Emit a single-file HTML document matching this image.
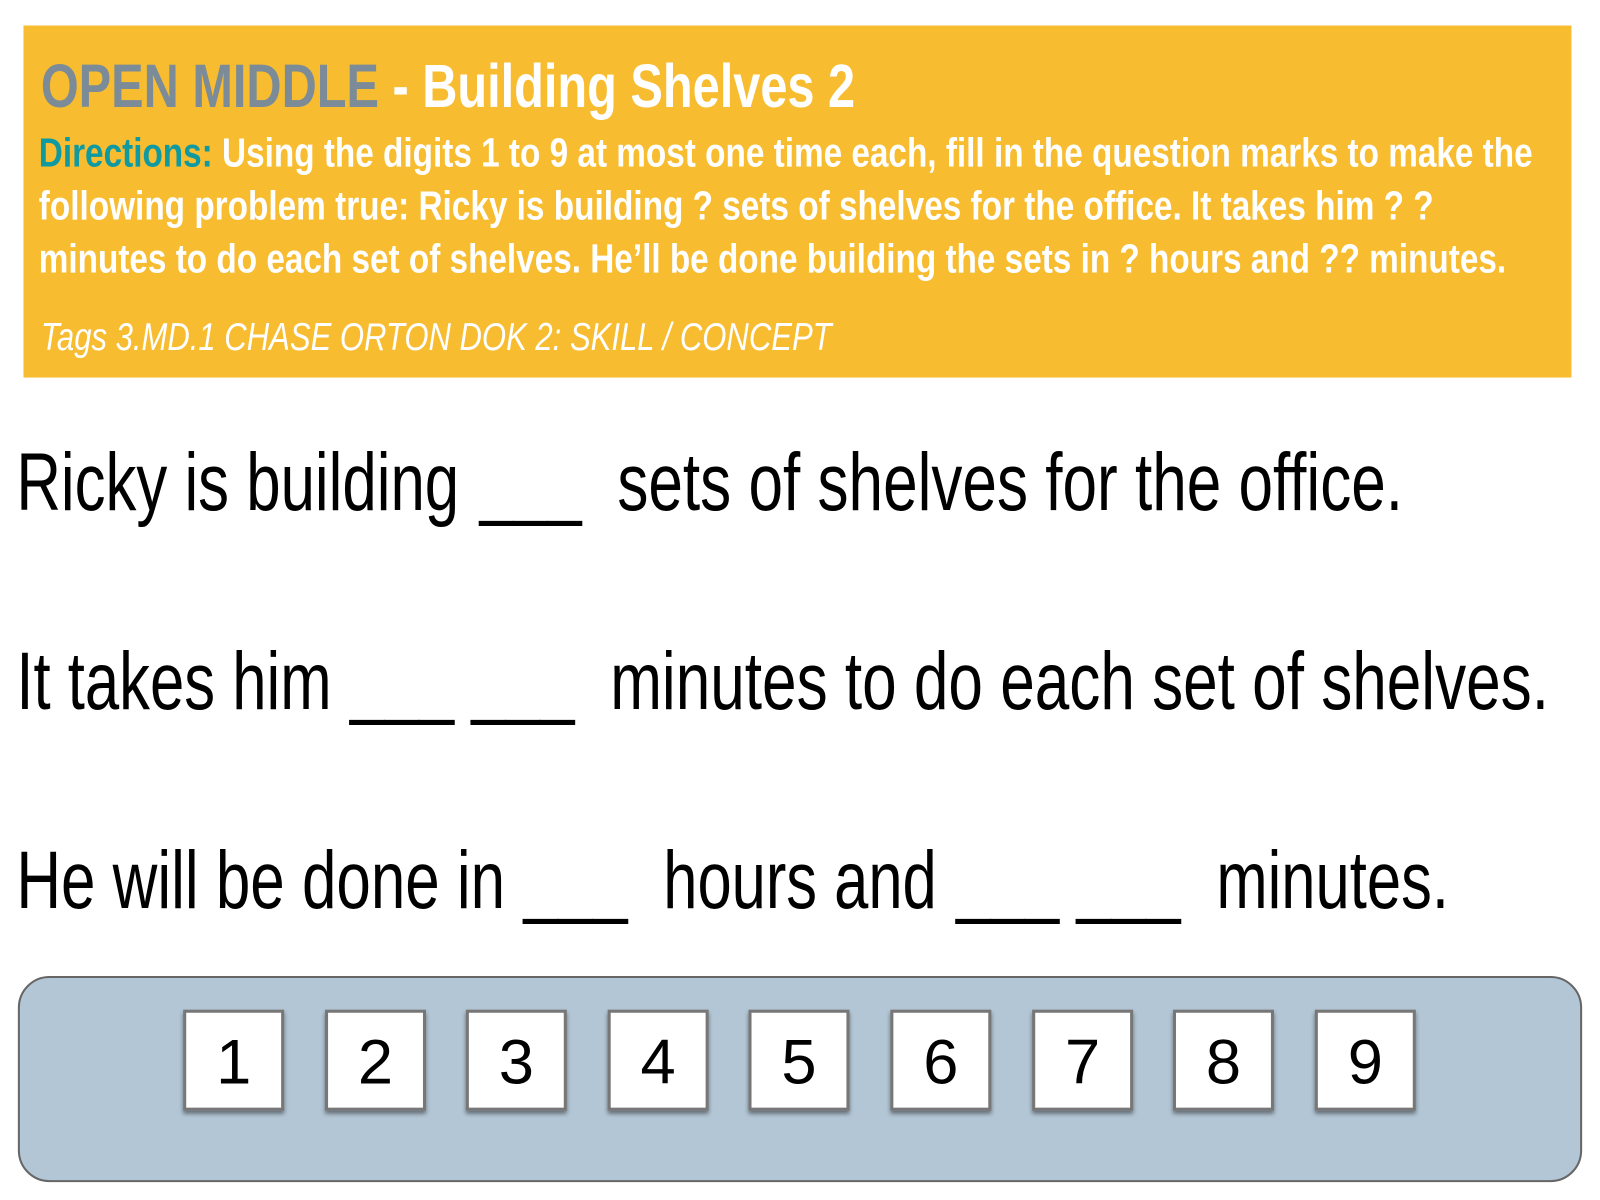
<!DOCTYPE html>
<html><head><meta charset="utf-8"><style>
html,body{margin:0;padding:0;background:#fff;width:1600px;height:1200px;overflow:hidden}
svg{position:absolute;left:0;top:0}
</style></head><body>
<svg width="1600" height="1200" viewBox="0 0 1568 1176" preserveAspectRatio="none" xmlns="http://www.w3.org/2000/svg" font-family="Liberation Sans, sans-serif">
<rect x="23" y="25" width="1517" height="345" fill="#F7BC30"/>
<text x="40" y="105" font-size="60" font-weight="bold" textLength="798" lengthAdjust="spacingAndGlyphs"><tspan fill="#7B8B97">OPEN MIDDLE</tspan><tspan fill="#fff"> - Building Shelves 2</tspan></text>
<g font-size="40" font-weight="bold" fill="#fff">
<text x="38" y="163" textLength="1464" lengthAdjust="spacingAndGlyphs"><tspan fill="#0E9AA0">Directions:</tspan> Using the digits 1 to 9 at most one time each, fill in the question marks to make the</text>
<text x="38" y="215" textLength="1367" lengthAdjust="spacingAndGlyphs">following problem true: Ricky is building ? sets of shelves for the office. It takes him ? ?</text>
<text x="38" y="267" textLength="1438" lengthAdjust="spacingAndGlyphs">minutes to do each set of shelves. He’ll be done building the sets in ? hours and ?? minutes.</text>
</g>
<text x="40" y="343" font-size="38" font-style="italic" fill="#fff" textLength="775" lengthAdjust="spacingAndGlyphs">Tags 3.MD.1 CHASE ORTON DOK 2: SKILL / CONCEPT</text>
<g font-size="80" fill="#000" lengthAdjust="spacingAndGlyphs">
<text x="16" y="500" textLength="434" lengthAdjust="spacingAndGlyphs">Ricky is building</text>
<text x="470" y="500" textLength="100" lengthAdjust="spacingAndGlyphs">___</text>
<text x="605" y="500" textLength="770" lengthAdjust="spacingAndGlyphs">sets of shelves for the office.</text>
<text x="16" y="695" textLength="309" lengthAdjust="spacingAndGlyphs">It takes him</text>
<text x="343" y="695" textLength="102" lengthAdjust="spacingAndGlyphs">___</text>
<text x="462" y="695" textLength="101" lengthAdjust="spacingAndGlyphs">___</text>
<text x="598" y="695" textLength="920" lengthAdjust="spacingAndGlyphs">minutes to do each set of shelves.</text>
<text x="16" y="890" textLength="479" lengthAdjust="spacingAndGlyphs">He will be done in</text>
<text x="513" y="890" textLength="102" lengthAdjust="spacingAndGlyphs">___</text>
<text x="650" y="890" textLength="268" lengthAdjust="spacingAndGlyphs">hours and</text>
<text x="937" y="890" textLength="101" lengthAdjust="spacingAndGlyphs">___</text>
<text x="1055" y="890" textLength="102" lengthAdjust="spacingAndGlyphs">___</text>
<text x="1192" y="890" textLength="228" lengthAdjust="spacingAndGlyphs">minutes.</text>
</g>
<rect x="18.5" y="957.5" width="1531" height="200" rx="30" fill="#B3C6D5" stroke="#666" stroke-width="2"/>
<defs><filter id="s" x="-20%" y="-20%" width="140%" height="140%"><feDropShadow dx="0" dy="3" stdDeviation="2" flood-color="#000" flood-opacity="0.45"/></filter></defs>
<g font-size="62" text-anchor="middle" fill="#000">
<g transform="translate(181,991)"><rect width="96" height="96" fill="#fff" stroke="#777" stroke-width="3" filter="url(#s)"/><text x="48" y="71">1</text></g>
<g transform="translate(320,991)"><rect width="96" height="96" fill="#fff" stroke="#777" stroke-width="3" filter="url(#s)"/><text x="48" y="71">2</text></g>
<g transform="translate(458,991)"><rect width="96" height="96" fill="#fff" stroke="#777" stroke-width="3" filter="url(#s)"/><text x="48" y="71">3</text></g>
<g transform="translate(597,991)"><rect width="96" height="96" fill="#fff" stroke="#777" stroke-width="3" filter="url(#s)"/><text x="48" y="71">4</text></g>
<g transform="translate(735,991)"><rect width="96" height="96" fill="#fff" stroke="#777" stroke-width="3" filter="url(#s)"/><text x="48" y="71">5</text></g>
<g transform="translate(874,991)"><rect width="96" height="96" fill="#fff" stroke="#777" stroke-width="3" filter="url(#s)"/><text x="48" y="71">6</text></g>
<g transform="translate(1013,991)"><rect width="96" height="96" fill="#fff" stroke="#777" stroke-width="3" filter="url(#s)"/><text x="48" y="71">7</text></g>
<g transform="translate(1151,991)"><rect width="96" height="96" fill="#fff" stroke="#777" stroke-width="3" filter="url(#s)"/><text x="48" y="71">8</text></g>
<g transform="translate(1290,991)"><rect width="96" height="96" fill="#fff" stroke="#777" stroke-width="3" filter="url(#s)"/><text x="48" y="71">9</text></g>
</g>
</svg>
</body></html>
